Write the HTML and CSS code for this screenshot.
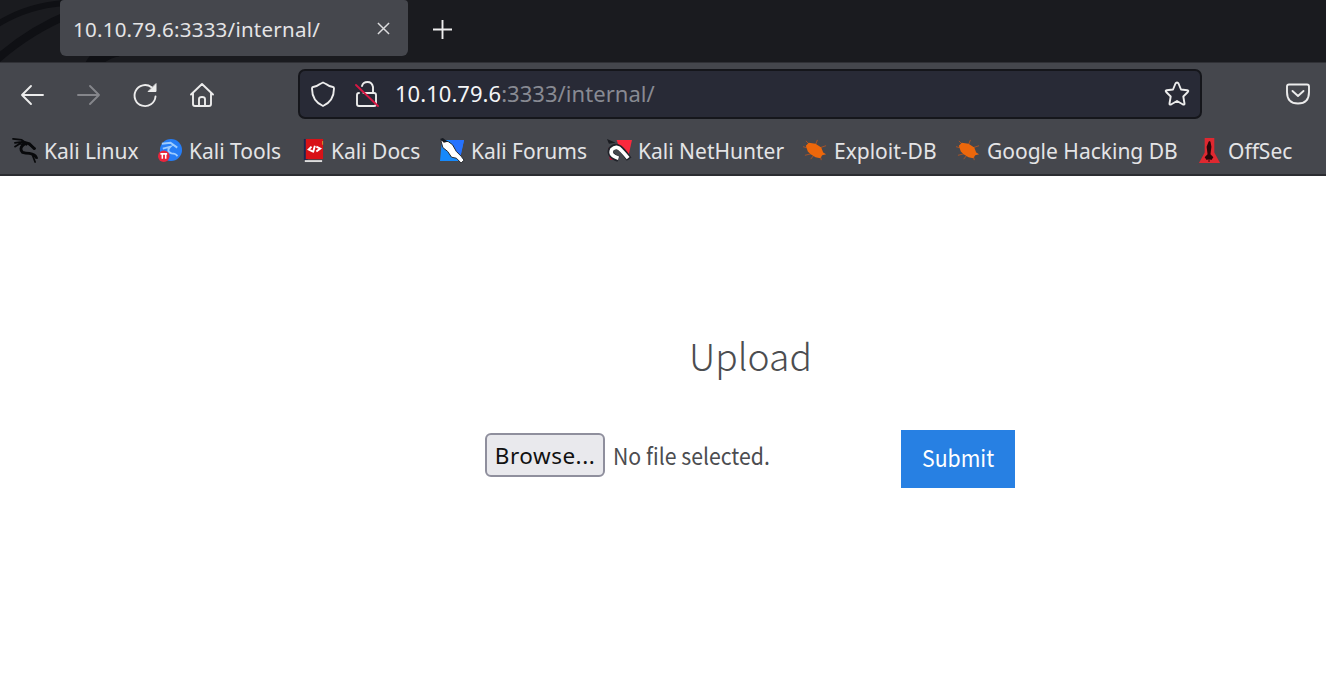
FILE: index.html
```
<!DOCTYPE html>
<html lang="en">
<head>
<meta charset="utf-8">
<title>10.10.79.6:3333/internal/</title>
<link rel="stylesheet" href="styles.css">
</head>
<body>
<header class="browser">
  <div class="tabs">
    <svg class="tabs-art" viewBox="0 0 180 62" fill="none" stroke="#0f1014"><path stroke-width="6" d="M-5 26Q25 6 64 3"/><path stroke-width="8" d="M-5 61Q30 30 70 14"/><path stroke-width="15" d="M92 66Q100 52 118 49"/></svg>
    <div class="tab">
      <span class="tab-title">10.10.79.6:3333/internal/</span>
      <svg class="close" viewBox="0 0 14 14"><path d="M1 1l12 12M13 1L1 13"/></svg>
    </div>
    <svg class="plus" viewBox="0 0 20 20"><path d="M10 0v20M0 10h20"/></svg>
  </div>
  <div class="toolbar">
    <nav class="buttons">
      <svg class="icon" viewBox="0 0 24 24"><path d="M23 12H2M11 3L2 12l9 9"/></svg>
      <svg class="icon dim" viewBox="0 0 24 24"><path d="M1 12h21M13 3l9 9-9 9"/></svg>
      <svg class="icon" viewBox="0 0 24 24"><path d="M18.500 4.300A10.500 10.500 0 1 0 22.500 13.500"/><path class="solid" d="M23 1v7.500h-7.500z"/></svg>
      <svg class="icon" viewBox="0 0 24 24"><path d="M1 11.500L12 1l11 10.500M3 10v11q0 2 2 2h14q2 0 2-2V10M9 23v-7q0-2 3-2t3 2v7"/></svg>
    </nav>
    <div class="address">
      <svg class="icon" viewBox="0 0 24 24"><path d="M12 0.500L15 2Q18 4.500 22 5q1 .2 1 1.500Q23 19 12 24 1 19 1 6.500 1 5.200 2 5q4-.5 7-3z"/></svg>
      <svg class="icon lock" viewBox="0 0 24 26"><path d="M7 5Q8 1 12.500 1T18 6v6M8.500 12H19q2 0 2 2v9q0 2-2 2H4q-2 0-2-2v-9q0-2 2-2"/><path class="slash" d="M1 4l22 21"/></svg>
      <span class="url"><b>10.10.79.6</b>:3333/internal/</span>
      <svg class="icon star" viewBox="0 0 26 26"><path d="M13 1.500Q14 1.500 14.500 2.500l2.500 6 6.300.8q1.700.3.500 1.700l-4.500 4.500 1.200 7q.1 1.600-1.500 1L13 20l-6 3.500q-1.600.6-1.500-1l1.200-7L2.200 11q-1.200-1.400.5-1.700L9 8.500l2.500-6Q12 1.500 13 1.500z"/></svg>
    </div>
    <svg class="icon pocket" viewBox="0 0 24 22"><path d="M3 1.500h18q2 0 2 2V9q0 11.500-11 11.500T1 9V3.500q0-2 2-2zM6.500 8l5.500 5 5.500-5"/></svg>
  </div>
  <nav class="bookmarks">
    <a class="bookmark"><svg viewBox="0 0 26 26" fill="none" stroke="#08090b" stroke-linecap="round"><path stroke-width="1.800" d="M0 1l9 1 5 4M2 5l7-1 5 3M2 9l5-3 5 1"/><path stroke-width="3" d="M10 4l7 2 5 5M11 7q-5 4-1 8 3 1 7 1 6 1 7 4"/><path stroke-width="1.800" d="M17 7l6 4M20 17l3 8M22 18l3 3"/></svg>Kali Linux</a>
    <a class="bookmark"><svg viewBox="0 0 26 26"><circle cx="13.500" cy="12.500" r="11.500" fill="#267df5"/><path fill="none" stroke="#9dccff" stroke-width="2" d="M4 6l9-1 7 5M5 11l8-2q-5 5 1 7 5 0 6 3"/><circle cx="6" cy="19" r="6" fill="#e9253c"/><path stroke="#fff" stroke-width="1.600" fill="none" d="M2.500 16.500h7M4.500 16.500v5M8 16.500v5"/></svg>Kali Tools</a>
    <a class="bookmark"><svg viewBox="0 0 26 26"><path fill="#1b2651" d="M4 1h4v22H4z"/><path fill="#d81217" d="M6 1h18v21H6z"/><path fill="#ddd" d="M5 23h18v2H5z"/><path fill="#d39131" d="M23 3h1v4h-1z"/><path stroke="#fff" stroke-width="2" fill="none" d="M12 9l-3 3 4 2M15.500 8l-2 7M17 9l4 2-4 3"/></svg>Kali Docs</a>
    <a class="bookmark"><svg viewBox="0 0 26 26"><path fill="#1689fb" d="M2 2h23l-5 22H0z"/><path fill="#2672ff" d="M10 2h15l-4 19z"/><path stroke="#202329" fill="#fff" d="M1 3l2 7 5 4 4 6 5 1 5 5 3-3-3-4-5-5-4-7-4-3-7-2z"/><path fill="#171b22" d="M0 1l3-1 5 4-4 1z"/></svg>Kali Forums</a>
    <a class="bookmark"><svg viewBox="0 0 26 26"><path fill="#fa293d" d="M10 2h16l-4 18-8-6z"/><path fill="#b40e31" d="M1 10l10 12-8 1z"/><path fill="none" stroke="#202229" stroke-width="6" d="M12 22Q2 18 4 12q5-6 11 0 3 3 8 10"/><path fill="none" stroke="#fff" stroke-width="3.800" d="M12 21q-10-3-7-9 5-5 10 1 3 3 7 8"/><path fill="#191b20" d="M0 1l9 4-7 1z"/></svg>Kali NetHunter</a>
    <a class="bookmark"><svg viewBox="0 0 26 26"><path stroke="#a85328" fill="none" d="M3 3l6 6M0 9l7 2M2 18l8-2M8 22l4-5M13 7l2-5M18 10l6-2M18 18l1 5"/><path fill="#ed670b" d="M3 8l3-3 7 1 6 4 2 5 3 2-4 1-2 3-5-1-5-3-3-3z"/></svg>Exploit-DB</a>
    <a class="bookmark"><svg viewBox="0 0 26 26"><path stroke="#a85328" fill="none" d="M3 3l6 6M0 9l7 2M2 18l8-2M8 22l4-5M13 7l2-5M18 10l6-2M18 18l1 5"/><path fill="#ed670b" d="M3 8l3-3 7 1 6 4 2 5 3 2-4 1-2 3-5-1-5-3-3-3z"/></svg>Google Hacking DB</a>
    <a class="bookmark"><svg viewBox="0 0 26 26"><path fill="#df2830" d="M8 0h10v15l6 11H2l6-11z"/><path fill="#250709" d="M12 4l1-1 1 1 1 5-1 8 3 3-2 3-2-1v3h-1v-3l-2 1-2-3 3-3-1-8z"/></svg>OffSec</a>
  </nav>
</header>
<main class="page">
  <h1 class="heading">Upload</h1>
  <form class="form">
    <button class="browse" type="button">Browse...</button>
    <span class="filename"><span class="condensed">No file selected.</span></span>
    <button class="submit" type="button"><span class="condensed">Submit</span></button>
  </form>
</main>
</body>
</html>
```
FILE: styles.css
```
* { box-sizing: border-box; }
body { margin: 0; width: 1326px; height: 676px; overflow: hidden; background: #fff; font-family: "Noto Sans", sans-serif; }
svg { display: block; flex: none; overflow: visible; }
.browser { height: 176px; background: #45474d; color: #e4e4e6; border-bottom: 2px solid #2b2c31; }
.tabs { position: relative; display: flex; height: 63px; padding-left: 60px; background: #1a1b1f; border-bottom: 1px solid #303136; }
.tabs-art { position: absolute; left: 0; top: 0; width: 180px; height: 62px; overflow: hidden; }
.tab { position: relative; display: flex; align-items: center; justify-content: space-between; width: 348px; height: 56px; padding: 1px 18px 0 13px; background: #45474d; border-radius: 4px 4px 6px 6px; }
.tab-title { font-size: 20.500px; letter-spacing: .24px; }
.close { width: 13px; height: 13px; margin-bottom: 1px; fill: none; stroke: #dcdcde; stroke-width: 1.600; }
.plus { width: 19px; height: 19px; margin: 20px 0 0 25px; stroke: #eee; stroke-width: 2; }
.toolbar { display: flex; align-items: center; height: 62px; padding-left: 20px; }
.icon { width: 24px; height: 24px; fill: none; stroke: #ececec; stroke-width: 1.900; stroke-linecap: round; stroke-linejoin: round; }
.solid { fill: #ececec; stroke-width: 1; }
.dim { stroke: #85868b; }
.buttons { display: flex; gap: 32.500px; width: 278px; padding-top: 2px; }
.address { display: flex; align-items: center; width: 904px; height: 50px; padding: 0 10px 0 11px; background: #282a36; border: 2px solid #15161b; border-radius: 7px; }
.lock { height: 26px; margin-left: 20px; }
.slash { stroke: #d71643; }
.url { margin: -2px 0 0 16px; color: #888a93; font-size: 22px; letter-spacing: .04px; }
.url b { color: #f5f5f6; font-weight: 400; }
.star { width: 26px; height: 26px; margin-left: auto; }
.pocket { margin-left: 84px; height: 22px; }
.bookmarks { display: grid; grid-template-columns: 145px 142px 140px 167px 196px 153px 241px auto; height: 49px; padding-left: 13px; font-size: 21px; }
.bookmark { display: flex; align-items: center; gap: 6px; white-space: nowrap; padding-top: 3px; }
.bookmark svg { width: 25px; height: 25px; margin-top: -1px; }
.page { padding-top: 149px; color: #4c4d50; font-family: "Noto Sans CJK SC", sans-serif; }
.heading { margin: 0 0 0 689px; font-size: 37.200px; font-weight: 300; line-height: 60px; }
.form { display: flex; align-items: flex-start; margin-top: 45px; padding-left: 485px; }
.browse { width: 120px; height: 44px; margin-top: 3px; padding: 0; border: 2px solid #8f8f9d; border-radius: 6px; background: #e9e9ed; color: #111; font: 22.500px "Noto Sans", sans-serif; letter-spacing: .5px; }
.filename { width: 288px; margin: 7px 0 0 8px; font-size: 23px; line-height: 36px; white-space: nowrap; }
.condensed { display: inline-block; transform: scaleX(.923); transform-origin: left; }
.submit { width: 114px; height: 58px; padding: 0 0 4px; border: 0; background: #2780e3; color: #fff; font: 23px "Noto Sans CJK SC", sans-serif; }
.submit .condensed { transform-origin: center; }
```
